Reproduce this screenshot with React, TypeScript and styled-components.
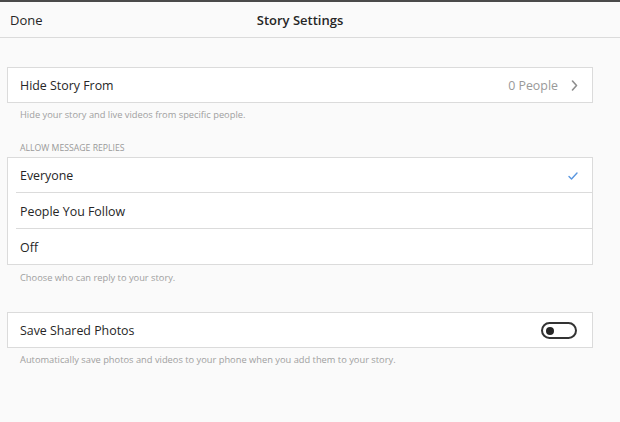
import React, { useState } from 'react'
import styled, { createGlobalStyle } from 'styled-components'

const GlobalStyle = createGlobalStyle`
    html, body {
        margin: 0;
        padding: 0;
        background: #fafafa;
    }
    body {
        font-family: 'Open Sans', 'Liberation Sans', sans-serif;
        color: #262626;
    }
`

const Page = styled.div`
    width: 620px;
    height: 422px;
    background: #fafafa;
    border-top: 2px solid #4a4a4a;
    box-sizing: border-box;
    overflow: hidden;
`

const HeaderBar = styled.div`
    border-bottom: 1px solid #dbdbdb;
`

const Header = styled.header`
    height: 35px;
    display: grid;
    grid-template-columns: 1fr auto 1fr;
    align-items: center;
    width: 600px;
    padding: 0 10px;
    box-sizing: border-box;
`

const DoneButton = styled.span`
    font-size: 13px;
    color: #262626;
    justify-self: start;
`

const Title = styled.h1`
    margin: 0;
    font-size: 13px;
    font-weight: 600;
    color: #262626;
`

const Content = styled.main`
    width: 600px;
    padding: 29px 7px 0;
    box-sizing: border-box;
    display: flex;
    flex-direction: column;
`

const Card = styled.section<{ $top?: number }>`
    background: #fff;
    border: 1px solid #dbdbdb;
    margin-top: ${(p) => p.$top ?? 0}px;
`

const Row = styled.div<{ $divider?: boolean }>`
    height: 34px;
    display: flex;
    align-items: center;
    justify-content: space-between;
    padding: 1px 14px 0 12px;
    box-sizing: border-box;
    position: relative;
    ${(p) =>
        p.$divider &&
        `
        &::before {
            content: '';
            position: absolute;
            top: -1px;
            left: 8px;
            right: 0;
            border-top: 1px solid #dbdbdb;
        }
    `}
    & + & {
        height: 35px;
        margin-top: 1px;
    }
`

const Label = styled.span`
    font-size: 12.4px;
    color: #262626;
`

const Aside = styled.span`
    display: flex;
    align-items: center;
    gap: 13px;
    font-size: 12.4px;
    color: #999;
`

const Caption = styled.p<{ $top: number }>`
    margin: 0;
    padding: ${(p) => p.$top}px 0 0 13px;
    font-size: 9.3px;
    line-height: 12px;
    color: #a0a0a0;
`

const SectionTitle = styled.h2`
    margin: 21px 0 3px 13px;
    font-size: 8.7px;
    line-height: 12px;
    font-weight: 400;
    text-transform: uppercase;
    color: #999;
`

const ToggleTrack = styled.button<{ $on: boolean }>`
    width: 36px;
    height: 17px;
    border: 2px solid #333;
    border-radius: 9px;
    background: ${(p) => (p.$on ? '#333' : '#fff')};
    padding: 0 3px;
    box-sizing: border-box;
    display: flex;
    align-items: center;
    justify-content: ${(p) => (p.$on ? 'flex-end' : 'flex-start')};
    cursor: pointer;
    margin-right: 1px;
`

const ToggleKnob = styled.span<{ $on: boolean }>`
    width: 8px;
    height: 8px;
    border-radius: 50%;
    background: ${(p) => (p.$on ? '#fff' : '#262626')};
`

function Chevron() {
    return (
        <svg width="7" height="11" viewBox="0 0 7 11" fill="none">
            <polyline
                points="1.5,1 5.5,5.5 1.5,10"
                stroke="#8e8e8e"
                strokeWidth="1.6"
                strokeLinecap="round"
                strokeLinejoin="round"
            />
        </svg>
    )
}

function Check() {
    return (
        <svg width="10" height="8" viewBox="0 0 10 8" fill="none">
            <polyline
                points="1,4.5 3.5,7 9,1"
                stroke="#5a97e0"
                strokeWidth="1.4"
                strokeLinecap="round"
                strokeLinejoin="round"
            />
        </svg>
    )
}

const replyOptions = ['Everyone', 'People You Follow', 'Off']

export default function App() {
    const [reply, setReply] = useState('Everyone')
    const [saveShared, setSaveShared] = useState(false)

    return (
        <Page>
            <GlobalStyle />
            <HeaderBar>
                <Header>
                    <DoneButton>Done</DoneButton>
                    <Title>Story Settings</Title>
                    <span />
                </Header>
            </HeaderBar>
            <Content>
                <Card>
                    <Row>
                        <Label>Hide Story From</Label>
                        <Aside>
                            0 People
                            <Chevron />
                        </Aside>
                    </Row>
                </Card>
                <Caption $top={6}>
                    Hide your story and live videos from specific people.
                </Caption>

                <SectionTitle>Allow Message Replies</SectionTitle>
                <Card>
                    {replyOptions.map((option, i) => (
                        <Row
                            key={option}
                            $divider={i > 0}
                            onClick={() => setReply(option)}
                        >
                            <Label>{option}</Label>
                            {reply === option && <Check />}
                        </Row>
                    ))}
                </Card>
                <Caption $top={7}>Choose who can reply to your story.</Caption>

                <Card $top={28}>
                    <Row>
                        <Label>Save Shared Photos</Label>
                        <ToggleTrack
                            $on={saveShared}
                            onClick={() => setSaveShared(!saveShared)}
                        >
                            <ToggleKnob $on={saveShared} />
                        </ToggleTrack>
                    </Row>
                </Card>
                <Caption $top={6}>
                    Automatically save photos and videos to your phone when you
                    add them to your story.
                </Caption>
            </Content>
        </Page>
    )
}
